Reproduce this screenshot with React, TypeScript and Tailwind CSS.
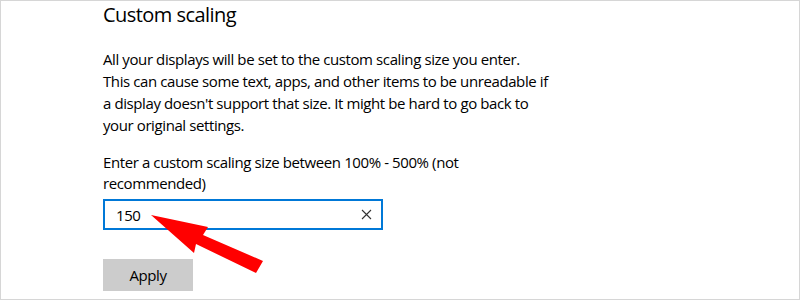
import React from 'react'

const font = { fontFamily: '"Open Sans", "Noto Sans", sans-serif' }

const paragraph = [
  'All your displays will be set to the custom scaling size you enter.',
  'This can cause some text, apps, and other items to be unreadable if',
  "a display doesn't support that size. It might be hard to go back to",
  'your original settings.',
]

function ClearIcon() {
  return (
    <svg width="11" height="11" viewBox="0 0 11 11" className="shrink-0">
      <path d="M1 1 L10 10 M10 1 L1 10" stroke="#333" strokeWidth="1.1" fill="none" />
    </svg>
  )
}

function Arrow() {
  // red annotation pointing at the input value
  return (
    <svg className="absolute left-0 top-0 pointer-events-none" width="800" height="300" viewBox="0 0 800 300">
      <polygon
        points="150,214 207,226 202,234 262,260 255,272 195,243 193,252"
        fill="#ff0000"
      />
    </svg>
  )
}

export default function App() {
  const [value, setValue] = React.useState('150')

  return (
    <div
      className="relative w-[800px] h-[300px] overflow-hidden bg-white border border-[#d6d6d6] text-black"
      style={font}
    >
      <div className="flex flex-col pl-[102px]">
        <h2 className="text-[20px] leading-[28px] font-normal tracking-[-0.55px]">Custom scaling</h2>

        <p className="mt-[19px] text-[15px] leading-[22px] tracking-[-0.4px]">
          {paragraph.map((line) => (
            <span key={line} className="block whitespace-nowrap">{line}</span>
          ))}
        </p>

        <p className="mt-[16px] text-[15px] leading-[21px] tracking-[-0.4px]">
          <span className="block whitespace-nowrap">Enter a custom scaling size between 100% - 500% (not</span>
          <span className="block whitespace-nowrap">recommended)</span>
        </p>

        <div className="mt-[5px] flex items-center w-[280px] h-[31px] border-2 border-[#0078d7] pl-[11px] pr-[9px]">
          <input
            value={value}
            onChange={(e) => setValue(e.target.value)}
            className="flex-1 min-w-0 bg-transparent outline-none text-[15px] leading-[20px] tracking-[-0.4px]"
            style={font}
          />
          <ClearIcon />
        </div>

        <button className="mt-[29px] w-[90px] h-[32px] bg-[#cccccc] text-[15px] leading-[20px] tracking-[-0.4px] text-black">
          Apply
        </button>
      </div>

      <Arrow />
    </div>
  )
}
